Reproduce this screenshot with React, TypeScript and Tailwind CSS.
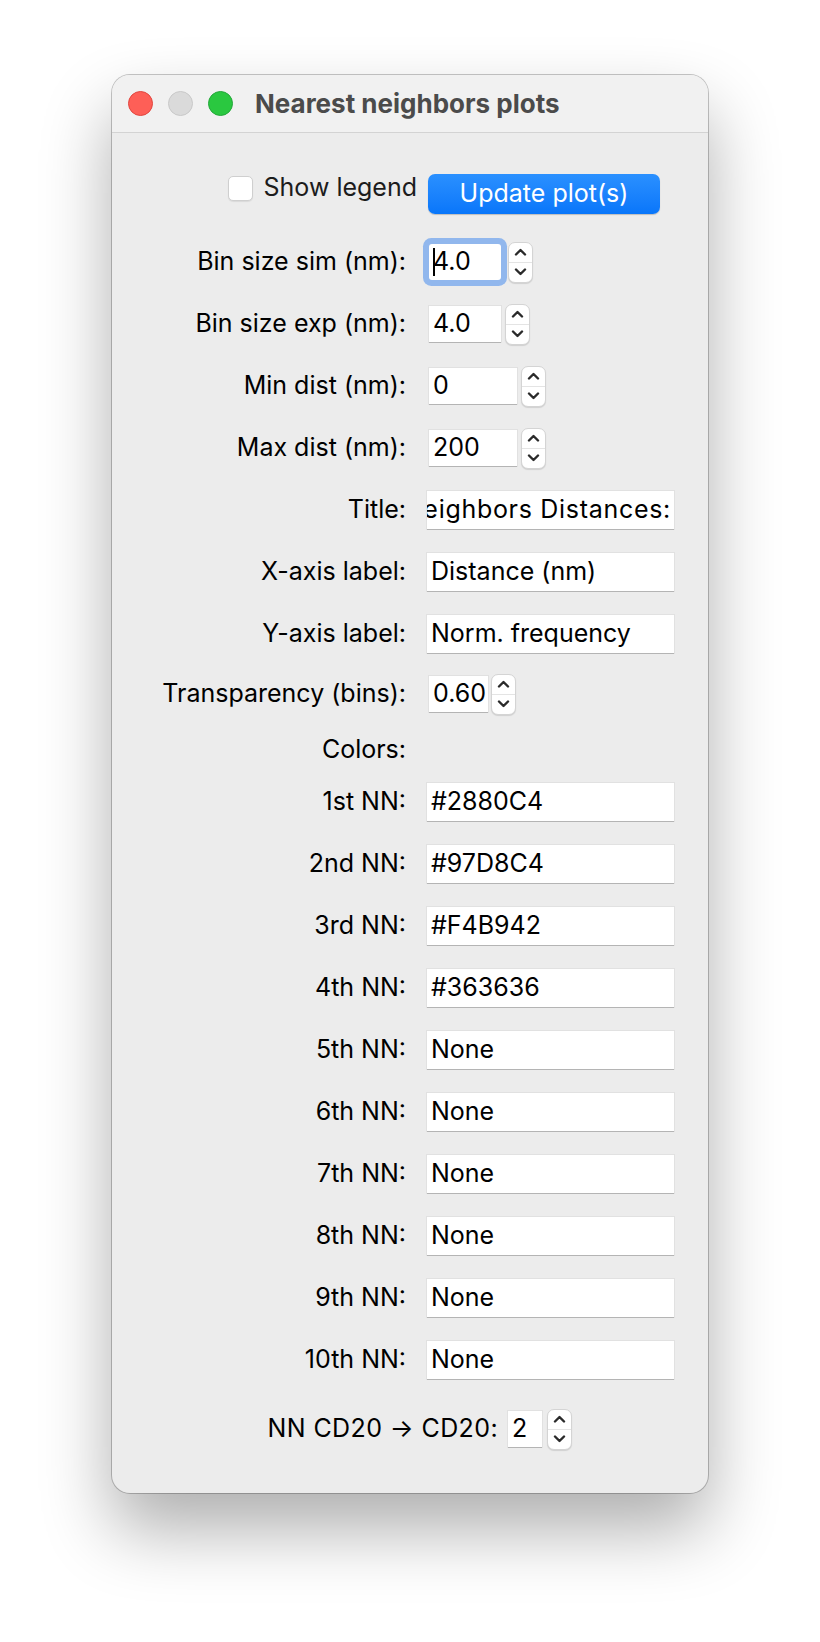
import React from 'react';

const FONT = { fontFamily: 'Inter, "Liberation Sans", Arial, sans-serif' };

function Stepper({ className = '' }: { className?: string }) {
  return (
    <div
      className={`relative flex h-[41px] w-[25px] shrink-0 flex-col items-center rounded-[7px] border border-[#d4d4d4] bg-white shadow-[0_1px_1px_rgba(0,0,0,0.12)] ${className}`}
    >
      <div className="flex flex-1 items-center justify-center">
        <svg width="13" height="8" viewBox="0 0 13 8">
          <polyline points="2,6.5 6.5,2 11,6.5" fill="none" stroke="#2a2a2a" strokeWidth="2.4" strokeLinecap="round" strokeLinejoin="round" />
        </svg>
      </div>
      <div className="h-px w-full bg-[#e4e4e4]" />
      <div className="flex flex-1 items-center justify-center">
        <svg width="13" height="8" viewBox="0 0 13 8">
          <polyline points="2,1.5 6.5,6 11,1.5" fill="none" stroke="#2a2a2a" strokeWidth="2.4" strokeLinecap="round" strokeLinejoin="round" />
        </svg>
      </div>
    </div>
  );
}

function Field({ value, className = '', focused = false }: { value: string; className?: string; focused?: boolean }) {
  return (
    <div
      className={`relative flex h-[36px] items-center overflow-hidden bg-white pl-[4px] text-[25px] text-black ${
        focused
          ? 'rounded-[3px] shadow-[0_0_0_6px_#91b7ed]'
          : 'shadow-[0_1px_0_#b4b4b4,0_0_0_1px_#e1e1e1]'
      } ${className}`}
    >
      {focused && <div className="absolute left-[4px] top-[4px] h-[28px] w-[2px] bg-black" />}
      <span className="whitespace-nowrap">{value}</span>
    </div>
  );
}

function Label({ children }: { children: React.ReactNode }) {
  return <div className="w-[295px] shrink-0 whitespace-nowrap pr-[1px] text-right text-[25px] text-black">{children}</div>;
}

function Row({ label, children, className = '' }: { label: string; children: React.ReactNode; className?: string }) {
  return (
    <div className={`flex h-[38px] items-center gap-[20px] ${className}`}>
      <Label>{label}</Label>
      <div className="flex items-center">{children}</div>
    </div>
  );
}

const colorRows = [
  ['1st NN:', '#2880C4'],
  ['2nd NN:', '#97D8C4'],
  ['3rd NN:', '#F4B942'],
  ['4th NN:', '#363636'],
  ['5th NN:', 'None'],
  ['6th NN:', 'None'],
  ['7th NN:', 'None'],
  ['8th NN:', 'None'],
  ['9th NN:', 'None'],
  ['10th NN:', 'None'],
];

export default function App() {
  return (
    <div className="flex min-h-[1642px] w-[820px] justify-center bg-white" style={FONT}>
      <div className="mt-[75px] h-[1418px] w-[596px] overflow-hidden rounded-[18px] bg-[#ececec] shadow-[0_0_0_1px_rgba(0,0,0,0.22),0_36px_70px_rgba(0,0,0,0.32)]">
        {/* title bar */}
        <div className="flex h-[58px] items-center border-b border-[#d3d3d3] bg-[#f1f1f1] pl-[16px]">
          <div className="flex items-center gap-[15px]">
            <div className="h-[25px] w-[25px] rounded-full border border-[#e1463f] bg-[#fe5f57]" />
            <div className="h-[25px] w-[25px] rounded-full border border-[#c8c8c8] bg-[#dadada]" />
            <div className="h-[25px] w-[25px] rounded-full border border-[#24a73a] bg-[#2ac840]" />
          </div>
          <div className="ml-[22px] text-[26px] font-bold text-[#4b4b4b]">Nearest neighbors plots</div>
        </div>

        {/* body */}
        <div className="flex flex-col pt-[41px]">
          <div className="flex h-[40px] items-start">
            <div className="mt-[1px] flex h-[26px] w-[305px] shrink-0 items-center justify-end gap-[11px]">
              <div className="h-[25px] w-[25px] rounded-[5px] border border-[#cfcfcf] bg-white shadow-[0_1px_1px_rgba(0,0,0,0.08)]" />
              <span className="whitespace-nowrap text-[25px] text-[#1c1c1c]">Show legend</span>
            </div>
            <button className="ml-[11px] flex h-[40px] w-[232px] items-center justify-center rounded-[7px] bg-gradient-to-b from-[#2a90ff] to-[#0876fa] text-[25px] text-white shadow-[0_1px_1px_rgba(0,0,0,0.2)]">
              Update plot(s)
            </button>
          </div>

          <Row label="Bin size sim (nm):" className="mt-[29px]">
            <Field value="4.0" focused className="ml-[2px] w-[72px]" />
            <Stepper className="ml-[7px]" />
          </Row>
          <Row label="Bin size exp (nm):" className="mt-[24px]">
            <Field value="4.0" className="ml-[2px] w-[72px]" />
            <Stepper className="ml-[4px]" />
          </Row>
          <Row label="Min dist (nm):" className="mt-[24px]">
            <Field value="0" className="ml-[2px] w-[88px]" />
            <Stepper className="ml-[4px]" />
          </Row>
          <Row label="Max dist (nm):" className="mt-[24px]">
            <Field value="200" className="ml-[2px] w-[88px]" />
            <Stepper className="ml-[4px]" />
          </Row>
          <Row label="Title:" className="mt-[24px]">
            <div className="flex h-[38px] w-[247px] items-center justify-end overflow-hidden bg-white pr-[3px] text-[25px] tracking-[0.7px] text-black shadow-[0_1px_0_#b4b4b4,0_0_0_1px_#e1e1e1]">
              <span className="whitespace-nowrap">Nearest Neighbors Distances:</span>
            </div>
          </Row>
          <Row label="X-axis label:" className="mt-[24px]">
            <Field value="Distance (nm)" className="h-[38px] w-[247px]" />
          </Row>
          <Row label="Y-axis label:" className="mt-[24px]">
            <Field value="Norm. frequency" className="h-[38px] w-[247px]" />
          </Row>
          <Row label="Transparency (bins):" className="mt-[22px]">
            <Field value="0.60" className="ml-[2px] w-[59px]" />
            <Stepper className="ml-[3px]" />
          </Row>
          <div className="mt-[18px] flex h-[38px] items-center">
            <Label>Colors:</Label>
          </div>
          {colorRows.map(([label, value], i) => (
            <Row key={label} label={label} className={i === 0 ? 'mt-[14px]' : 'mt-[24px]'}>
              <Field value={value} className="h-[38px] w-[247px]" />
            </Row>
          ))}

          <div className="mt-[31px] flex h-[38px] items-center">
            <div className="w-[386px] shrink-0 whitespace-nowrap text-right text-[25px] tracking-[0.4px] text-black">NN CD20 → CD20:</div>
            <Field value="2" className="ml-[10px] w-[34px]" />
            <Stepper className="ml-[5px]" />
          </div>
        </div>
      </div>
    </div>
  );
}
